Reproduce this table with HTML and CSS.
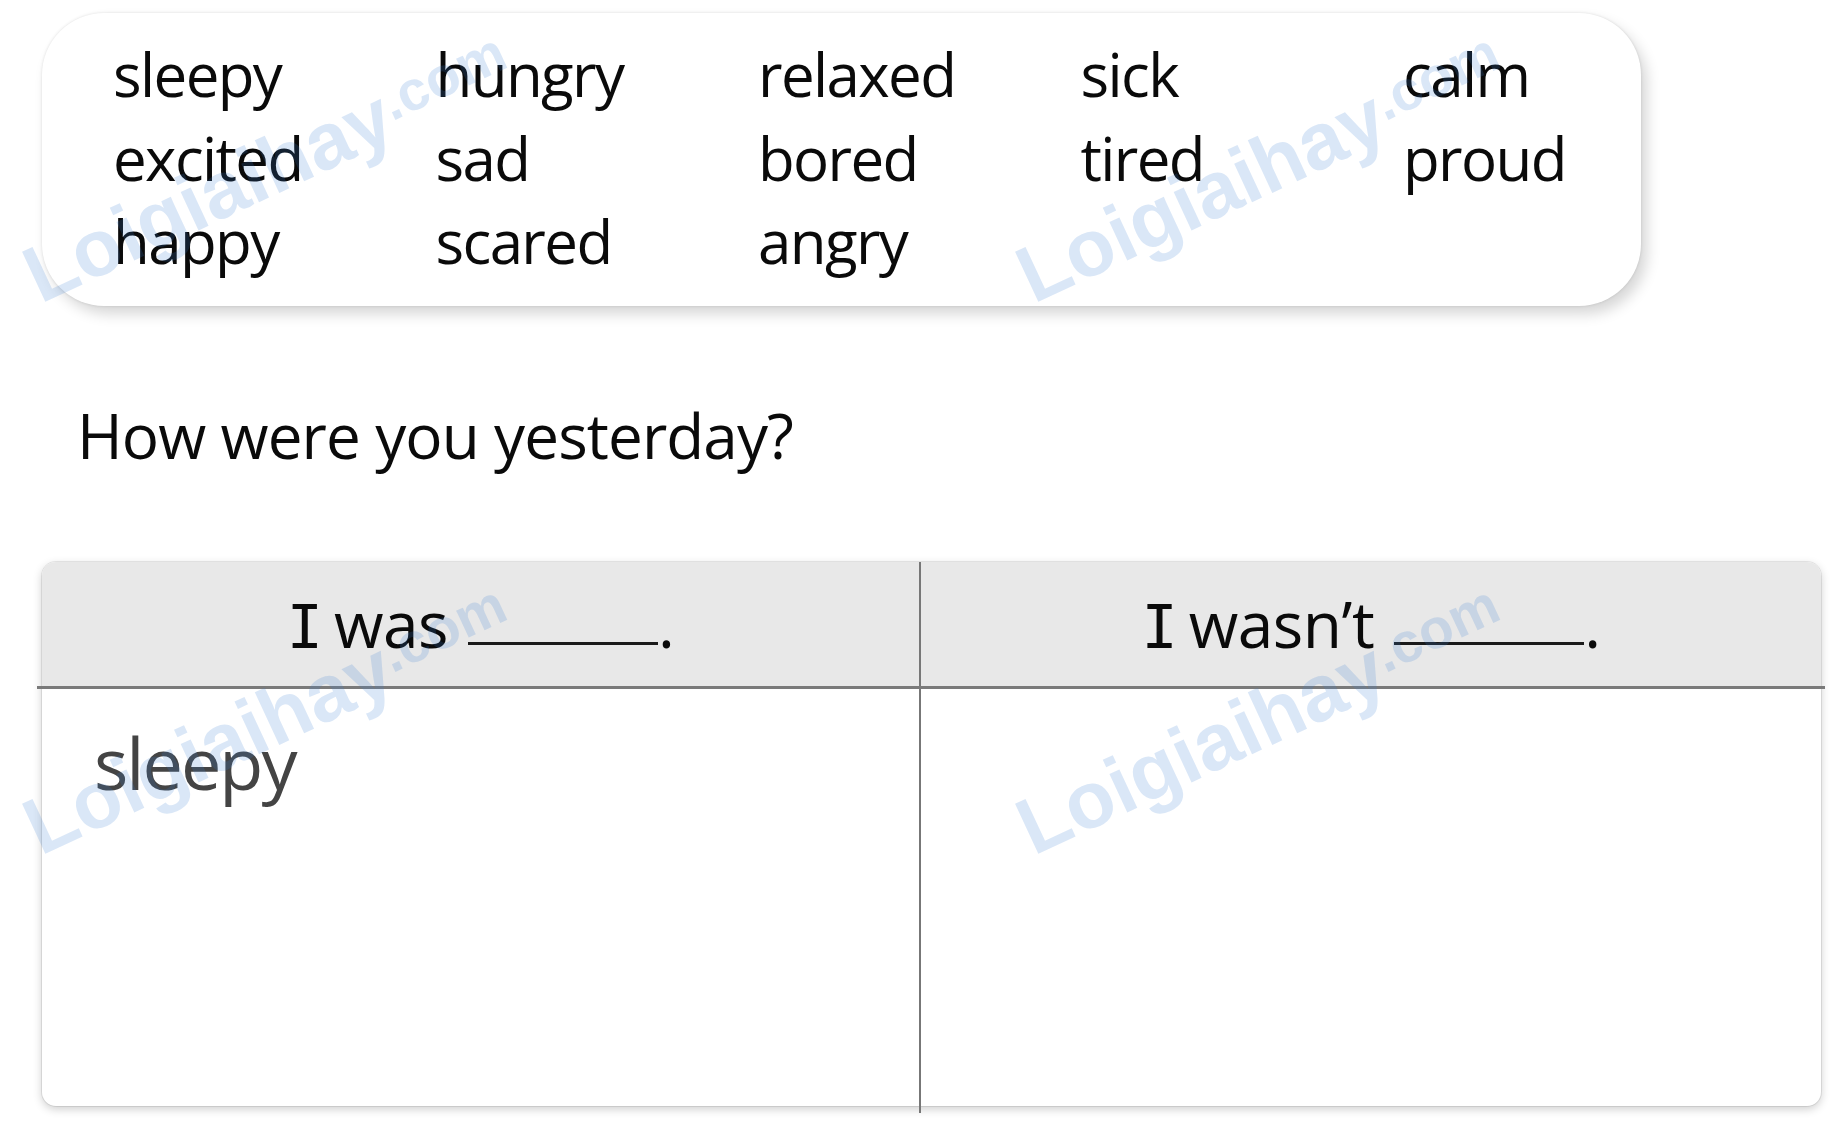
FILE: index.html
```html
<!DOCTYPE html>
<html lang="en">
<head>
<meta charset="utf-8">
<title>How were you yesterday?</title>
<link rel="stylesheet" href="styles.css">
</head>
<body>
<div class="page">
  <div class="wordbox">
    <span class="word">sleepy</span>
    <span class="word">hungry</span>
    <span class="word">relaxed</span>
    <span class="word">sick</span>
    <span class="word">calm</span>
    <span class="word">excited</span>
    <span class="word">sad</span>
    <span class="word">bored</span>
    <span class="word">tired</span>
    <span class="word">proud</span>
    <span class="word">happy</span>
    <span class="word">scared</span>
    <span class="word">angry</span>
  </div>

  <h1 class="question">How were you yesterday?</h1>

  <div class="table">
    <div class="head head-left"><span class="cap-i">I</span> was<span class="blank"></span>.</div>
    <div class="divider"></div>
    <div class="head head-right"><span class="cap-i">I</span> wasn’t<span class="blank"></span>.</div>
    <div class="rule"></div>
    <div class="cell cell-left"><span class="answer">sleepy</span></div>
    <div class="cell cell-right"></div>
  </div>

  <div class="wm wm-1">Loigiaihay<span class="wm-com">.com</span></div>
  <div class="wm wm-2">Loigiaihay<span class="wm-com">.com</span></div>
  <div class="wm wm-3">Loigiaihay<span class="wm-com">.com</span></div>
  <div class="wm wm-4">Loigiaihay<span class="wm-com">.com</span></div>
</div>
</body>
</html>
```

FILE: styles.css
```css
html, body {
  margin: 0;
  padding: 0;
  background: #ffffff;
}

body {
  font-family: "Open Sans", "Noto Sans", sans-serif;
  color: #0a0a0a;
}

.page {
  position: relative;
  width: 1842px;
  height: 1148px;
  overflow: hidden;
  padding-top: 13px;
  box-sizing: border-box;
}

/* ---------- word box ---------- */
.wordbox {
  margin-left: 42px;
  width: 1599px;
  height: 293px;
  box-sizing: border-box;
  padding: 20px 0 0 71px;
  background: #ffffff;
  border-radius: 62px;
  box-shadow: 0 0 3px rgba(0, 0, 0, 0.12), 6px 8px 14px rgba(0, 0, 0, 0.16);
  display: grid;
  grid-template-columns: repeat(5, 322.5px);
  grid-auto-rows: 83.5px;
  font-size: 60px;
  line-height: 83.5px;
  letter-spacing: -1.6px;
}

.word {
  white-space: nowrap;
}

/* ---------- question ---------- */
.question {
  margin: 87px 0 0 77px;
  font-size: 62px;
  font-weight: 400;
  line-height: 84px;
  letter-spacing: -0.9px;
}

/* ---------- table ---------- */
.table {
  margin: 85px 0 0 42px;
  width: 1779px;
  height: 544px;
  background: #ffffff;
  border-radius: 14px;
  box-shadow: 0 0 0 1px rgba(0, 0, 0, 0.08), 0 3px 10px rgba(0, 0, 0, 0.2);
  display: grid;
  grid-template-columns: 877px 2px 1fr;
  grid-template-rows: 124px 3px 1fr;
}

.head {
  background: #e8e8e8;
  text-align: center;
  font-size: 64px;
  line-height: 87px;
  padding-top: 18px;
  box-sizing: border-box;
  letter-spacing: -0.5px;
  white-space: nowrap;
}

.head-left {
  grid-column: 1;
  grid-row: 1;
  border-top-left-radius: 14px;
}

.head-right {
  grid-column: 3;
  grid-row: 1;
  border-top-right-radius: 14px;
}

.cap-i {
  font-family: "DejaVu Sans Mono", monospace;
  font-size: 60px;
  letter-spacing: -5px;
}

.blank {
  display: inline-block;
  width: 190px;
  height: 0;
  border-bottom: 3px solid #1a1a1a;
  margin-left: 20px;
  vertical-align: 3px;
}

.divider {
  grid-column: 2;
  grid-row: 1 / 4;
  background: #777777;
  margin-bottom: -7px;
}

.rule {
  grid-column: 1 / 4;
  grid-row: 2;
  background: #7a7a7a;
  margin: 0 -4px 0 -5px;
}

.cell-left {
  grid-column: 1;
  grid-row: 3;
  padding: 24px 0 0 52px;
}

.cell-right {
  grid-column: 3;
  grid-row: 3;
}

.answer {
  display: block;
  font-size: 72px;
  line-height: 98px;
  color: #444444;
  letter-spacing: -2px;
}

/* ---------- watermark ---------- */
.wm {
  position: absolute;
  font-family: "Liberation Sans", Arial, sans-serif;
  font-weight: 700;
  font-size: 80px;
  line-height: 1;
  white-space: nowrap;
  color: rgba(60, 130, 210, 0.19);
  transform-origin: 0 68px;
  transform: rotate(-25deg);
  pointer-events: none;
}

.wm-com {
  font-size: 56px;
  vertical-align: 17px;
}

.wm-1 { left: 41px; top: 237px; }
.wm-2 { left: 1034px; top: 237px; }
.wm-3 { left: 41px; top: 789px; }
.wm-4 { left: 1034px; top: 789px; }
```
